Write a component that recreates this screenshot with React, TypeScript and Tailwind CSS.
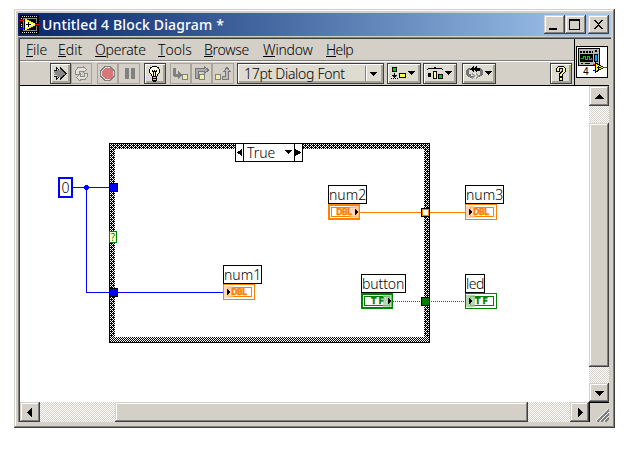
import type { ReactNode } from "react";

const FONT = "font-['Noto_Sans','Open_Sans',sans-serif]";
const RAISED =
  "bg-[#d4d0c8] shadow-[inset_-1px_-1px_#404040,inset_1px_1px_#d4d0c8,inset_-2px_-2px_#808080,inset_2px_2px_#fff]";
const TRACK = "bg-[conic-gradient(#d4d0c8_25%,#fff_0_50%,#d4d0c8_0_75%,#fff_0)] bg-[length:2px_2px]";

function Pic({ w, h, children }: { w: number; h: number; children: ReactNode }) {
  return (
    <svg width={w} height={h} viewBox={`0 0 ${w} ${h}`} shapeRendering="crispEdges" className="block shrink-0">
      {children}
    </svg>
  );
}

function TitleIcon() {
  return (
    <Pic w={19} h={19}>
      <rect width="19" height="19" />
      <path d="M2 1.500h16M2 17.500h16M1.500 3v2M1.500 9v3" stroke="#e0e0d0" strokeDasharray="1 1" />
      <path d="M3 3.500h14M3 15.500h14M3.500 3v13M16.500 3v5M16.500 11v5" stroke="#8a8a8a" />
      <path d="M5 4h2v1h2v1h2v1h2v1h2v3h-2v1h-2v1H9v1H7v1H5z" fill="#ff0" />
      <path d="M6 6h1v1h2v1h2v1h2v1h-2v1H9v1H7v1H6z" fill="#fff" />
      <path d="M6 9.500h5M8.500 7v5" stroke="#000" />
      <path d="M15 9.500h4M0 5.500h4" stroke="#f00" />
      <path d="M0 13.500h4" stroke="#00f" />
    </Pic>
  );
}

function WinButton({ children, className = "" }: { children: ReactNode; className?: string }) {
  return <div className={`${RAISED} flex h-[19px] w-[21px] items-center justify-center ${className}`}>{children}</div>;
}

function TitleBar() {
  return (
    <div className="flex h-[23px] items-center bg-linear-to-r from-[#0a246a] to-[#a6caf0] px-[2px]">
      <TitleIcon />
      <span className={`${FONT} ml-[3px] flex-1 text-[14px] font-medium tracking-[0.15px] whitespace-pre text-white`}>
        Untitled 4 Block Diagram *
      </span>
      <WinButton>
        <Pic w={21} h={19}><rect x="5" y="13" width="8" height="2" /></Pic>
      </WinButton>
      <WinButton>
        <Pic w={21} h={19}><path d="M4 4h11v11H4zM5 6v8h9V6z" fillRule="evenodd" /></Pic>
      </WinButton>
      <WinButton className="ml-[2px]">
        <Pic w={21} h={19}><path d="M6 5h2v1h1v1h1v1h1V7h1V6h1V5h2v1h-1v1h-1v1h-1v1h-1v1h1v1h1v1h1v1h1v1h-2v-1h-1v-1h-1v-1h-1v1H9v1H8v1H6v-1h1v-1h1v-1h1v-1h1V9H9V8H8V7H7V6H6z" /></Pic>
      </WinButton>
    </div>
  );
}

function MenuItem({ text, className }: { text: string; className: string }) {
  return (
    <span className={`${className} shrink-0 whitespace-nowrap`}>
      <span className="inline-block h-[16px] border-b border-black">{text[0]}</span>
      {text.slice(1)}
    </span>
  );
}

function MenuBar() {
  return (
    <div className={`${FONT} flex h-[23px] border-b border-white pl-[6px] text-[14px] leading-[17px] font-light text-black shadow-[inset_0_-1px_#808080]`}>
      <div className="flex pt-[2px]">
        <MenuItem text="File" className="w-[32px]" />
        <MenuItem text="Edit" className="w-[37px]" />
        <MenuItem text="Operate" className="w-[63px] tracking-[-0.2px]" />
        <MenuItem text="Tools" className="w-[46px]" />
        <MenuItem text="Browse" className="w-[59px] tracking-[-0.3px]" />
        <MenuItem text="Window" className="w-[63px] tracking-[-0.2px]" />
        <MenuItem text="Help" className="tracking-[-0.6px]" />
      </div>
    </div>
  );
}

function Tool({ flat, className = "", children }: { flat?: boolean; className?: string; children: ReactNode }) {
  const look = flat
    ? "border border-[#a8a49c] bg-[#d4d0c8]"
    : "border border-[#404040] bg-[#dedbd0] shadow-[inset_1px_1px_#fff,inset_-2px_-2px_#a5a298]";
  return <div className={`${look} flex h-[21px] shrink-0 items-center justify-center ${className}`}>{children}</div>;
}

function Toolbar() {
  return (
    <div className="flex h-[24px] items-start border-b border-black pt-[1px] pl-[30px]">
      <Tool className="w-[21px]">
        <Pic w={17} h={15}>
          <path d="M2 5h3V4h3V2h1v1h1v1h1v1h1v1h1v1h1v1h-1v1h-1v1h-1v1h-1v1H9v1H8v-2H5v2H4v-2h1V9H2V8h1V7H2z" fill="#888" />
          <path d="M2 4h3v1H2zM4 1h1v1h1v1h1v1H6V3H5v2H4zM8 1h1v1h1v1h1v1h1v1h1v1h1v1h1v1h-1v1h-1v1h-1v1h-1v1h-1v1H9v1H8v-2h1v-1h1v-1h1v-1h1V9h1V7h-1V6h-1V5h-1V4H9V3H8zM2 10h3v4H4v-3H2zM5 13h1v-1h1v-1H6v1H5z" fill="#111" />
        </Pic>
      </Tool>
      <Tool flat className="w-[21px]">
        <Pic w={17} h={15}>
          <path d="M2.500 8V4.500L5 1.500h5V0l3.500 3.500L10 7V5H6v3zM14.500 7v3.500L12 13.500H7V15l-3.500-3.500L7 8v2h4V7z" fill="#e4e1da" stroke="#8c8c8c" />
        </Pic>
      </Tool>
      <Tool flat className="ml-[5px] w-[21px]">
        <Pic w={15} h={15}>
          <path d="M5 .5h5l4.500 4.500v5L10 14.500H5L.5 10V5z" fill="#ddd" stroke="#808080" />
          <path d="M5 2h5l3 3v5l-3 3H5l-3-3V5z" fill="#d67878" />
        </Pic>
      </Tool>
      <Tool flat className="w-[22px]">
        <Pic w={15} h={15}><path d="M3 2h4v11H3zM9 2h4v11H9z" fill="#808080" /></Pic>
      </Tool>
      <Tool className="ml-[4px] w-[22px]">
        <Pic w={16} h={17}>
          <path d="M5 1h5v1h2v2h1v4h-1v1h-1v2H4V9H3V8H2V4h1V2h2z" />
          <path d="M5 2h5v1h1v1h1v4h-1v1h-1v2H5V9H4V8H3V4h1V3h1z" fill="#ffffe4" />
          <path d="M5 5h1v1h1V5h1v1h1V5h1v2H9v4H8V7H7v4H6V7H5zM5 11h5v5H9v1H6v-1H5z" />
          <path d="M6 12h3v1H6zM6 14h3v1H6z" fill="#fd0" />
        </Pic>
      </Tool>
      <Tool flat className="ml-[4px] w-[21px]">
        <Pic w={19} h={19}>
          <path d="M2 4h3v6h2V7h1v1h1v1h1v1h1v2h-1v1H9v1H8v1H7v-2H3v-1H2z" fill="#808080" />
          <path d="M11.500 10.500h5v5h-5z" fill="#f0eda8" stroke="#808080" />
        </Pic>
      </Tool>
      <Tool flat className="w-[21px]">
        <Pic w={19} h={19}>
          <path d="M3.500 14.500V4.500h9v-2l4 3.500-4 3.500v-2h-6v7z" fill="#aaa" stroke="#777" />
          <path d="M7.500 10.500h5v5h-5z" fill="#f0eda8" stroke="#808080" />
        </Pic>
      </Tool>
      <Tool flat className="w-[22px]">
        <Pic w={20} h={19}>
          <path d="M2.500 10.500h5v5h-5z" fill="#f0eda8" stroke="#808080" />
          <path d="M9.500 12.500h3v-5h-2L14 3.500l3.500 4h-2v8h-6z" fill="#bbb" stroke="#777" />
        </Pic>
      </Tool>
      <Tool className={`${FONT} ml-[3px] w-[147px] justify-start! pl-[6px] text-[14px] font-light`}>
        <span className="w-[121px] tracking-[-0.3px] whitespace-nowrap">17pt Dialog Font</span>
        <span className="h-[15px] w-[5px] border-l border-[#808080] shadow-[inset_1px_0_#fff]" />
        <Pic w={7} h={4}><path d="M0 0h7v1H6v1H5v1H4v1H3V3H2V2H1V1H0z" /></Pic>
      </Tool>
      <Tool className="ml-[3px] w-[34px]">
        <Pic w={26} h={15}>
          <path d="M1.500 1.500h4v4h-4z" fill="#0c0" stroke="#000" />
          <path d="M3 7h1v2h2v1H5v1H4v1H3v-1H2v-1H1V9h2zM0 12h1v1H0zM2 12h1v1H2zM4 12h1v1H4zM6 12h1v1H6z" />
          <path d="M8.500 7.500h6v4h-6z" fill="#ff5" stroke="#000" />
          <path d="M17 5h7v1h-1v1h-1v1h-1v1h-1V8h-1V7h-1V6h-1z" />
        </Pic>
      </Tool>
      <Tool className="ml-[2px] w-[34px]">
        <Pic w={26} h={15}>
          <path d="M0 3h1V2h6V1h2v1h6v1h1v1h-1V3H1v1H0zM1 7h3v4H1z" />
          <path d="M6.500 5.500h3v7h-3z" fill="#ffa" stroke="#000" />
          <path d="M11.500 8.500h4v4h-4z" fill="#0c0" stroke="#000" />
          <path d="M18 5h7v1h-1v1h-1v1h-1v1h-1V8h-1V7h-1V6h-1z" />
        </Pic>
      </Tool>
      <Tool className="ml-[5px] w-[34px]">
        <Pic w={28} h={17}>
          <path d="M3 3h3v2H4v4h2v2h2v2H5v-1H3v-1H2v-1H1V5h1V4h1zM13 3h3v1h1v1h1v5h-1v1h-2v1h-2v-2h2V5h-2z" fill="#777" />
          <path d="M5 4h1V3h1V2h1V1h1v2h1V2h1V1h1v2h3v3h-3v1h-1V6h-1V5H9v2H8V6H7V5H5z" />
          <path d="M7 8h1v1h1v1h1v2H9v1H8v1H7v-2h1v-2H7zM11 8h1v1h1v1h1v2h-1v1h-1v1h-1v-2h1v-2h-1z" fill="#999" />
          <path d="M20 6h7v1h-1v1h-1v1h-1v1h-1V9h-1V8h-1V7h-1z" />
        </Pic>
      </Tool>
      <Tool className="ml-[54px] w-[22px]">
        <Pic w={13} h={17}>
          <path d="M3 1h6v1h1v1h1v4h-1v1H9v1H8v3H4V8h1V7h1V6h1V4H5v3H1V3h1V2h1zM4 12h4v4H4z" />
          <path d="M3 2h6v1h1v4H9v1H8v1H7v2H5V9h1V8h1V7h1V3H4v3H2V3h1zM5 13h2v2H5z" fill="#ff8" />
        </Pic>
      </Tool>
    </div>
  );
}

function ViIcon() {
  return (
    <Pic w={32} h={32}>
      <path d="M.5 .5h31v31H.5z" fill="#fff" stroke="#000" />
      <path d="M2.500 2.500h21v17h-21z" fill="#b8b8b8" stroke="#000" />
      <path d="M4 6h13" stroke="#000" strokeWidth="2" strokeDasharray="2 1" />
      <path d="M4 8h13v8H4z" />
      <path d="M5 12.500h2v-2h2v3h2v-3h2v3h2v-2" fill="none" stroke="#0c0" />
      <path d="M18.500 8.500h3v7h-3z" fill="#0af" stroke="#000" />
      <path d="M19 4h2v2h-2zM5 17h2v1H5zM9 17h5v1H9z" />
      <path d="M19.500 17v9l8.500-4.500z" fill="#ff0" stroke="#000" />
      <path d="M21 21.500h4M22.500 20v4" stroke="#000" />
      <path d="M28 21.500h3M17 18.500h2" stroke="#f00" />
      <path d="M17 24.500h2" stroke="#00f" />
      <text x="7" y="29" fontFamily="Roboto, sans-serif" fontSize="10">4</text>
    </Pic>
  );
}

function Label({ text, className }: { text: string; className: string }) {
  return (
    <div className={`${FONT} ${className} absolute h-[19px] border border-black bg-white text-[14px] leading-[17px] font-light whitespace-nowrap`}>
      {text}
    </div>
  );
}

function Terminal({ kind, control, className }: { kind: "DBL" | "TF"; control?: boolean; className: string }) {
  const color = kind === "DBL" ? "#ff8000" : "#008000";
  const pale = kind === "DBL" ? "#ffcc99" : "#99cc99";
  return (
    <div className={`${className} absolute`}>
      <Pic w={32} h={16}>
        <rect x={control ? 1 : 0.5} y={control ? 1 : 0.5} width={control ? 30 : 31} height={control ? 14 : 15} fill="#fff" stroke={color} strokeWidth={control ? 2 : 1} />
        <rect x={control ? 3.5 : 5.5} y="3.5" width={control ? 25 : 23} height="9" fill="none" stroke={color} />
        <rect x={control ? 22 : 1} y="2" width="9" height="12" fill={pale} opacity="0.75" />
        <text x={kind === "TF" ? 10 : 8} y="11" fontFamily="DejaVu Sans, sans-serif" fontWeight="bold" fontSize="8" stroke={color} strokeWidth="0.3" textLength={kind === "TF" ? 13 : 16} fill={color}>{kind}</text>
        <path d={control ? "M27 5h1v1h1v1h1v2h-1v1h-1v1h-1z" : "M4 5h1v1h1v1h1v2H6v1H5v1H4z"} />
      </Pic>
    </div>
  );
}

function CaseFrame() {
  return (
    <div className="absolute top-[57px] left-[89px]">
      <Pic w={321} h={200}>
        <defs>
          <pattern id="weave" width="4" height="4" patternUnits="userSpaceOnUse">
            <rect width="4" height="4" />
            <path d="M0 0h1v1H0zM1 1h1v1H1zM3 1h1v1H3zM2 2h1v1H2zM1 3h1v1H1zM3 3h1v1H3z" fill="#fff" />
          </pattern>
          <pattern id="check" width="2" height="2" patternUnits="userSpaceOnUse">
            <rect width="2" height="2" />
            <path d="M0 0h1v1H0zM1 1h1v1H1z" fill="#fff" />
          </pattern>
        </defs>
        <path d="M1 1h319v198H1zM6 6v188h309V6z" fill="url(#weave)" fillRule="evenodd" />
        <rect x="1" y="194" width="319" height="5" fill="url(#check)" />
        <path d="M.5 .5h320v199H.5z" fill="none" stroke="#000" />
      </Pic>
    </div>
  );
}

function Wires() {
  return (
    <div className="absolute top-0 left-0">
      <Pic w={569} h={316}>
        <path d="M53 101.500h37M66.500 101v105M66 206.500h138" stroke="#00f" fill="none" />
        <path d="M65 99h3v1h1v3h-1v1h-3v-1h-1v-3h1z" fill="#00f" />
        <path d="M340 126.500h105" stroke="#ff8000" />
        <path d="M373 215.500h72" stroke="#008000" strokeDasharray="1 1" />
      </Pic>
    </div>
  );
}

function Canvas() {
  return (
    <div className="relative h-[316px] w-[569px] overflow-hidden bg-white">
      <CaseFrame />
      <Wires />
      <div className={`${FONT} absolute top-[57px] left-[215px] flex h-[19px] w-[68px] items-stretch border border-black bg-white text-[14px] leading-[17px] font-light`}>
        <div className="flex w-[8px] items-center border-r border-black">
          <Pic w={7} h={7}><path d="M6 0v7H5V6H4V5H2V4H1V3h1V2h2V1h1V0z" /></Pic>
        </div>
        <span className="w-[41px] pl-[3px]">True</span>
        <div className="flex w-[9px] items-center pb-[1px]"><Pic w={7} h={4}><path d="M0 0h7v1H6v1H5v1H4v1H3V3H2V2H1V1H0z" /></Pic></div>
        <div className="flex w-[8px] items-center border-l border-black">
          <Pic w={7} h={7}><path d="M0 0h1v1h2v1h2v1h1v1H5v1H3v1H1v1H0z" /></Pic>
        </div>
      </div>
      <div className={`${FONT} absolute top-[91px] left-[38px] flex h-[21px] w-[15px] items-center justify-center border-2 border-[#00f] bg-white text-[14px] leading-[17px] font-light`}>0</div>
      <div className="absolute top-[97px] left-[89px] size-[9px] border border-black bg-[#00f]" />
      <div className="absolute top-[202px] left-[89px] size-[9px] border border-black bg-[#00f]" />
      <div className="absolute top-[145px] left-[89px] flex h-[12px] w-[8px] items-center justify-center border border-[#008000] bg-[#ffffcc] font-['Noto_Sans',sans-serif] text-[10px] text-[#008000]">?</div>
      <div className="absolute top-[122px] left-[401px] size-[9px] border border-black bg-white shadow-[inset_0_0_0_1px_#ff8000]" />
      <div className="absolute top-[211px] left-[401px] size-[9px] border border-black bg-[#008000]" />
      <Label text="num2" className="top-[99px] left-[308px] w-[39px]" />
      <Terminal kind="DBL" control className="top-[118px] left-[308px]" />
      <Label text="num3" className="top-[99px] left-[445px] w-[39px]" />
      <Terminal kind="DBL" className="top-[118px] left-[445px]" />
      <Label text="num1" className="top-[179px] left-[203px] w-[39px]" />
      <Terminal kind="DBL" className="top-[198px] left-[203px]" />
      <Label text="button" className="top-[188px] left-[341px] w-[45px] tracking-[-0.1px]" />
      <Terminal kind="TF" control className="top-[207px] left-[341px]" />
      <Label text="led" className="top-[188px] left-[445px] w-[20px] tracking-[-0.5px]" />
      <Terminal kind="TF" className="top-[207px] left-[445px]" />
    </div>
  );
}

function ScrollButton({ d, className = "" }: { d: string; className?: string }) {
  return (
    <div className={`${RAISED} flex shrink-0 items-center justify-center ${className}`}>
      <Pic w={9} h={9}><path d={d} /></Pic>
    </div>
  );
}

export default function App() {
  return (
    <div className="h-[450px] w-[629px] overflow-hidden bg-white pt-[9px] pl-[14px]">
      <div className="h-[419px] w-[601px] bg-[#d4d0c8] p-[4px] shadow-[inset_-1px_-1px_#404040,inset_1px_1px_#d4d0c8,inset_-2px_-2px_#808080,inset_2px_2px_#fff]">
        <TitleBar />
        <div className="mt-[1px] border-t border-l border-[#808080]">
          <div className="border-t border-l border-[#404040]">
            <div className="flex h-[47px]">
              <div className="w-[554px]">
                <MenuBar />
                <Toolbar />
              </div>
              <div className="w-[35px] border-b border-l border-black pt-[7px] pl-[1px]"><ViIcon /></div>
            </div>
            <div className="flex">
              <Canvas />
              <div className={`${TRACK} flex w-[20px] flex-col`}>
                <ScrollButton d="M4 2h1v1h1v1h1v1h1v1h1v1H0V6h1V5h1V4h1V3h1z" className="h-[20px]" />
                <div className={`${RAISED} mt-[17px] h-[244px]`} />
                <ScrollButton d="M0 3h9v1H8v1H7v1H6v1H5v1H4V7H3V6H2V5H1V4H0z" className="mt-auto h-[19px]" />
              </div>
            </div>
            <div className="flex h-[20px]">
              <div className={`${TRACK} flex w-[569px]`}>
                <ScrollButton d="M6 0v9H5V8H4V7H3V6H2V5H1V4h1V3h1V2h1V1h1V0z" className="w-[20px]" />
                <div className={`${RAISED} ml-[75px] w-[413px]`} />
                <ScrollButton d="M3 0h1v1h1v1h1v1h1v1h1v1H7v1H6v1H5v1H4v1H3z" className="ml-auto w-[19px]" />
              </div>
              <div className="flex w-[20px] items-end justify-end border-t border-l border-black">
                <Pic w={13} h={13}>
                  <path d="M1 13L13 1M5 13l8-8M9 13l4-4" stroke="#808080" strokeWidth="2" />
                  <path d="M0 12L12 0M4 12l9-9M8 12l5-5" stroke="#fff" />
                </Pic>
              </div>
            </div>
          </div>
        </div>
      </div>
    </div>
  );
}
